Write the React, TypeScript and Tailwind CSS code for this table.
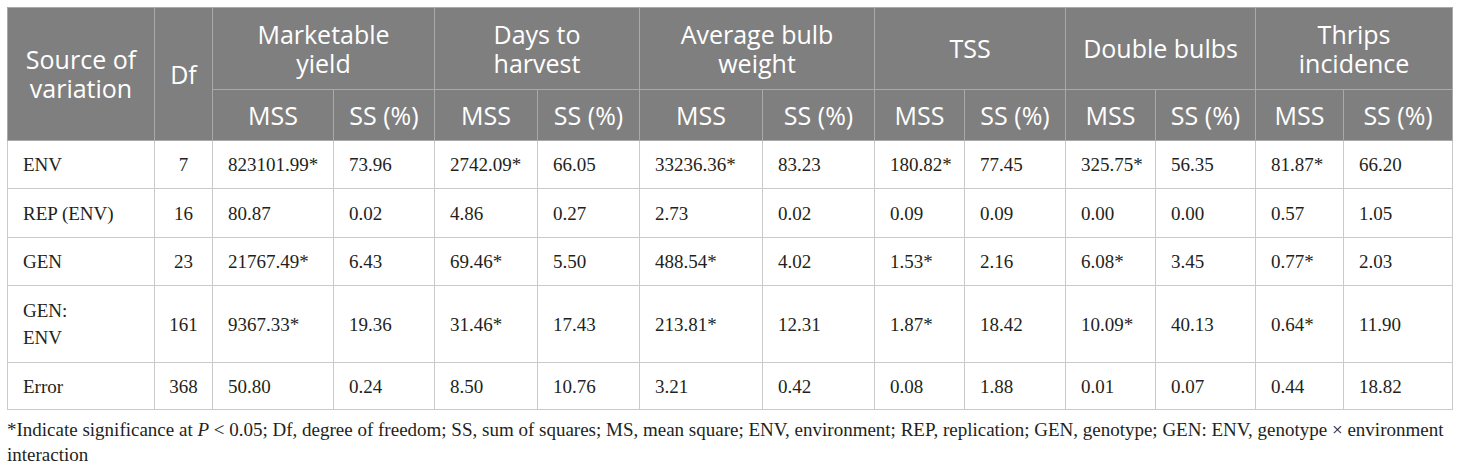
const COL_WIDTHS = [147, 58, 121, 101, 103, 102, 123, 112, 90, 101, 90, 100, 88, 109];

const TRAITS = [
  ["Marketable", "yield"],
  ["Days to", "harvest"],
  ["Average bulb", "weight"],
  ["TSS"],
  ["Double bulbs"],
  ["Thrips", "incidence"],
];

type Row = { source: string[]; df: string; values: string[]; h: string };

const ROWS: Row[] = [
  {
    source: ["ENV"],
    df: "7",
    values: ["823101.99*", "73.96", "2742.09*", "66.05", "33236.36*", "83.23", "180.82*", "77.45", "325.75*", "56.35", "81.87*", "66.20"],
    h: "h-[48px]",
  },
  {
    source: ["REP (ENV)"],
    df: "16",
    values: ["80.87", "0.02", "4.86", "0.27", "2.73", "0.02", "0.09", "0.09", "0.00", "0.00", "0.57", "1.05"],
    h: "h-[49px]",
  },
  {
    source: ["GEN"],
    df: "23",
    values: ["21767.49*", "6.43", "69.46*", "5.50", "488.54*", "4.02", "1.53*", "2.16", "6.08*", "3.45", "0.77*", "2.03"],
    h: "h-[48px]",
  },
  {
    source: ["GEN:", "ENV"],
    df: "161",
    values: ["9367.33*", "19.36", "31.46*", "17.43", "213.81*", "12.31", "1.87*", "18.42", "10.09*", "40.13", "0.64*", "11.90"],
    h: "h-[77px]",
  },
  {
    source: ["Error"],
    df: "368",
    values: ["50.80", "0.24", "8.50", "10.76", "3.21", "0.42", "0.08", "1.88", "0.01", "0.07", "0.44", "18.82"],
    h: "h-[47px]",
  },
];

// header cells share the grey fill and the lighter rule colour
const th =
  "border border-[#a9a9a9] bg-[#7f7f7f] text-center align-middle font-normal text-white";
const td = "border border-[#cacaca] px-[15px] align-middle text-left";

export default function App() {
  return (
    <div className="min-h-[467px] w-[1460px] bg-white pl-[7px] pt-[7px] text-[#231f20]">
      <table
        className="w-[1446px] table-fixed border-collapse border border-[#d0d0d0]"
        style={{ fontFamily: '"Liberation Serif", "Times New Roman", serif' }}
      >
        <colgroup>
          {COL_WIDTHS.map((w, i) => (
            <col key={i} style={{ width: w }} />
          ))}
        </colgroup>
        <thead
          className="text-[25px] leading-[29px]"
          style={{ fontFamily: '"Open Sans", "Noto Sans", sans-serif' }}
        >
          <tr className="h-[82px]">
            <th rowSpan={2} className={th}>
              Source of
              <br />
              variation
            </th>
            <th rowSpan={2} className={th}>
              Df
            </th>
            {TRAITS.map((t) => (
              <th key={t.join(" ")} colSpan={2} className={th}>
                {t.map((line, i) => (
                  <div key={i}>{line}</div>
                ))}
              </th>
            ))}
          </tr>
          <tr className="h-[51px]">
            {TRAITS.map((t) => (
              <>
                <th key={t[0] + "m"} className={th}>
                  MSS
                </th>
                <th key={t[0] + "s"} className={th}>
                  SS (%)
                </th>
              </>
            ))}
          </tr>
        </thead>
        <tbody className="text-[19px] leading-[27px]">
          {ROWS.map((r) => (
            <tr key={r.source.join(" ")} className={r.h}>
              <td className={td}>
                {r.source.map((line, i) => (
                  <div key={i}>{line}</div>
                ))}
              </td>
              <td className={td + " !text-center !px-0"}>{r.df}</td>
              {r.values.map((v, i) => (
                <td key={i} className={td}>
                  {v}
                </td>
              ))}
            </tr>
          ))}
        </tbody>
      </table>
      <p
        className="mt-[7px] w-[1446px] text-[19px] leading-[25px] text-[#231f20]"
        style={{ fontFamily: '"Liberation Serif", "Times New Roman", serif' }}
      >
        *Indicate significance at <i>P</i> &lt; 0.05; Df, degree of freedom; SS, sum of squares; MS,
        mean square; ENV, environment; REP, replication; GEN, genotype; GEN: ENV, genotype × environment
        interaction
      </p>
    </div>
  );
}
